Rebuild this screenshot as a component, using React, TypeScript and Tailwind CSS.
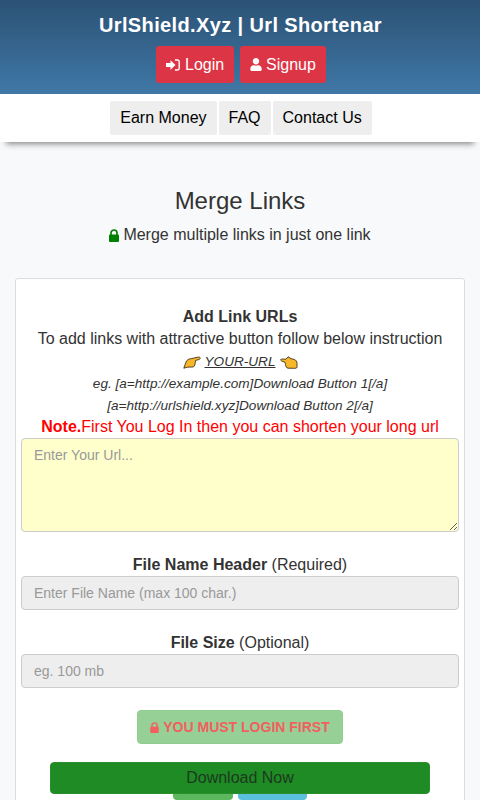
import { FaUser } from "react-icons/fa";

function Lock({ className }: { className: string }) {
  return (
    <svg viewBox="0 0 10 13" className={className} fill="currentColor">
      <path d="M2 6V4a3 3 0 0 1 6 0v2" fill="none" stroke="currentColor" strokeWidth="1.7" />
      <rect x="0" y="5.5" width="10" height="7.5" rx="1" />
    </svg>
  );
}

function SignIn() {
  return (
    <svg viewBox="0 0 14 12" className="h-[12px] w-[14px]" fill="white">
      <path d="M0 4h4.5V1.2L9.5 6l-5 4.8V8H0z" />
      <path d="M9 1h2.5A1.7 1.7 0 0 1 13.2 2.7v6.6A1.7 1.7 0 0 1 11.5 11H9" fill="none" stroke="white" strokeWidth="1.4" />
    </svg>
  );
}

function HandRight() {
  return (
    <svg viewBox="0 0 18 13" className="h-[13px] w-[18px]">
      <path
        d="M0.8 12.2 L3 6 C3.8 3.8 6 2.8 8.5 2.6 L15.5 1 C17.6 0.8 17.7 3.3 15.8 3.6 L12.6 4.4 L11.8 9 C11.5 10.6 10.5 11 9 11 L4.5 11.2 Z"
        fill="#f8b62a"
        stroke="#2a2112"
        strokeWidth="0.8"
        strokeLinejoin="round"
      />
    </svg>
  );
}

function HandLeft() {
  return (
    <svg viewBox="0 0 18 13" className="h-[13px] w-[18px]">
      <path
        d="M8 0.8 L11 2.6 L14.5 3.6 C16.2 4.2 16.8 5.5 17 7 L17 11 C17 12 16.2 12.3 15.2 12.3 L8 12.2 C6.5 12 5.8 10.5 5.5 8.5 L5 6.3 L1.6 5 C0 4.3 0.8 2.6 2.3 3 L6 3.2 Z"
        fill="#f8b62a"
        stroke="#2a2112"
        strokeWidth="0.8"
        strokeLinejoin="round"
      />
    </svg>
  );
}

export default function App() {
  return (
    <div className="relative h-[800px] overflow-hidden bg-[#f8f9fa] font-['Liberation_Sans',Arial,sans-serif] text-[16px] leading-[24px] text-[#333]">
      <header className="flex h-[94px] flex-col items-center bg-gradient-to-b from-[#2c5275] to-[#3f78a7] pt-[10px]">
        <h1 className="pl-[1px] text-[20px] font-bold leading-[30px] tracking-[0.37px] text-white">UrlShield.Xyz | Url Shortenar</h1>
        <div className="mt-[6px] flex gap-[6px] pl-[2px]">
          <a className="flex h-[37px] w-[78px] items-center gap-[5px] rounded-[3px] bg-[#dc3545] pl-[10px] text-white">
            <SignIn /> Login
          </a>
          <a className="flex h-[37px] w-[86px] items-center gap-[4px] rounded-[3px] bg-[#dc3545] pl-[10px] text-white">
            <FaUser className="h-[13px] w-[12px]" /> Signup
          </a>
        </div>
      </header>
      <nav className="flex h-[48px] justify-center gap-[2px] bg-white pt-[7px] pl-[2px] text-black shadow-[0_8px_6px_-6px_#888]">
        <a className="h-[34px] rounded-[2px] bg-[#eeeeee] px-[10px] py-[5px]">Earn Money</a>
        <a className="h-[34px] rounded-[2px] bg-[#eeeeee] px-[10px] py-[5px]">FAQ</a>
        <a className="h-[34px] rounded-[2px] bg-[#eeeeee] px-[10px] py-[5px]">Contact Us</a>
      </nav>
      <main className="px-[15px] pt-[42px]">
        <h2 className="text-center text-[24px] font-normal leading-[34px]">Merge Links</h2>
        <p className="mt-[2px] flex items-center justify-center gap-[4px] leading-[30px]">
          <Lock className="h-[13px] w-[10px] text-[#008000]" /> Merge multiple links in just one link
        </p>
        <section className="mt-[28px] rounded-[3px] border border-[#dddddd] bg-white px-[5px] pt-[26px] pb-[60px]">
          <div className="text-center">
            <p className="font-bold leading-[23px]">Add Link URLs</p>
            <p className="leading-[22px]">To add links with attractive button follow below instruction</p>
            <p className="mt-[1px] flex h-[22px] items-center justify-center gap-[4px] text-[13.6px] italic">
              <HandRight />
              <span className="underline">YOUR-URL</span>
              <HandLeft />
            </p>
            <p className="text-[13.6px] italic leading-[22px]">eg. [a=http://example.com]Download Button 1[/a]</p>
            <p className="text-[13.6px] italic leading-[22px]">[a=http://urlshield.xyz]Download Button 2[/a]</p>
            <p className="mt-[-1px] leading-[22px] text-[#ff0000]"><b>Note.</b>First You Log In then you can shorten your long url</p>
          </div>
          <textarea
            placeholder="Enter Your Url..."
            className="block h-[94px] w-full rounded-[4px] border border-[#cccccc] bg-[#ffffcc] px-[12px] py-[6px] text-[14px] leading-[20px] placeholder:text-[#999999]"
          />
          <p className="mt-[21px] text-center leading-[23px]"><b>File Name Header</b> (Required)</p>
          <input
            placeholder="Enter File Name (max 100 char.)"
            className="block h-[34px] w-full rounded-[4px] border border-[#cccccc] bg-[#eeeeee] px-[12px] text-[14px] placeholder:text-[#999999]"
          />
          <p className="mt-[21px] text-center leading-[23px]"><b>File Size</b> (Optional)</p>
          <input
            placeholder="eg. 100 mb"
            className="block h-[34px] w-full rounded-[4px] border border-[#cccccc] bg-[#eeeeee] px-[12px] text-[14px] placeholder:text-[#999999]"
          />
          <div className="mt-[22px] flex justify-center">
            <button className="flex h-[34px] w-[206px] items-center justify-center gap-[4px] rounded-[4px] border border-[#8fce8f] bg-[#96d096] text-[14px] font-bold text-[#f15f5f]">
              <Lock className="h-[11px] w-[9px]" /> YOU MUST LOGIN FIRST
            </button>
          </div>
          <div className="mt-[22px] flex justify-center gap-[5px]">
            <span className="block h-[34px] w-[60px] rounded-[4px] bg-[#5cb85c]" />
            <span className="block h-[34px] w-[69px] rounded-[4px] bg-[#5bc0de]" />
          </div>
        </section>
      </main>
      <a className="absolute left-[50px] top-[762px] flex h-[32px] w-[380px] items-center justify-center rounded-[4px] border border-[#2a8f2a] bg-[#1e8b24] text-[#1d3a1f]">
        Download Now
      </a>
    </div>
  );
}
